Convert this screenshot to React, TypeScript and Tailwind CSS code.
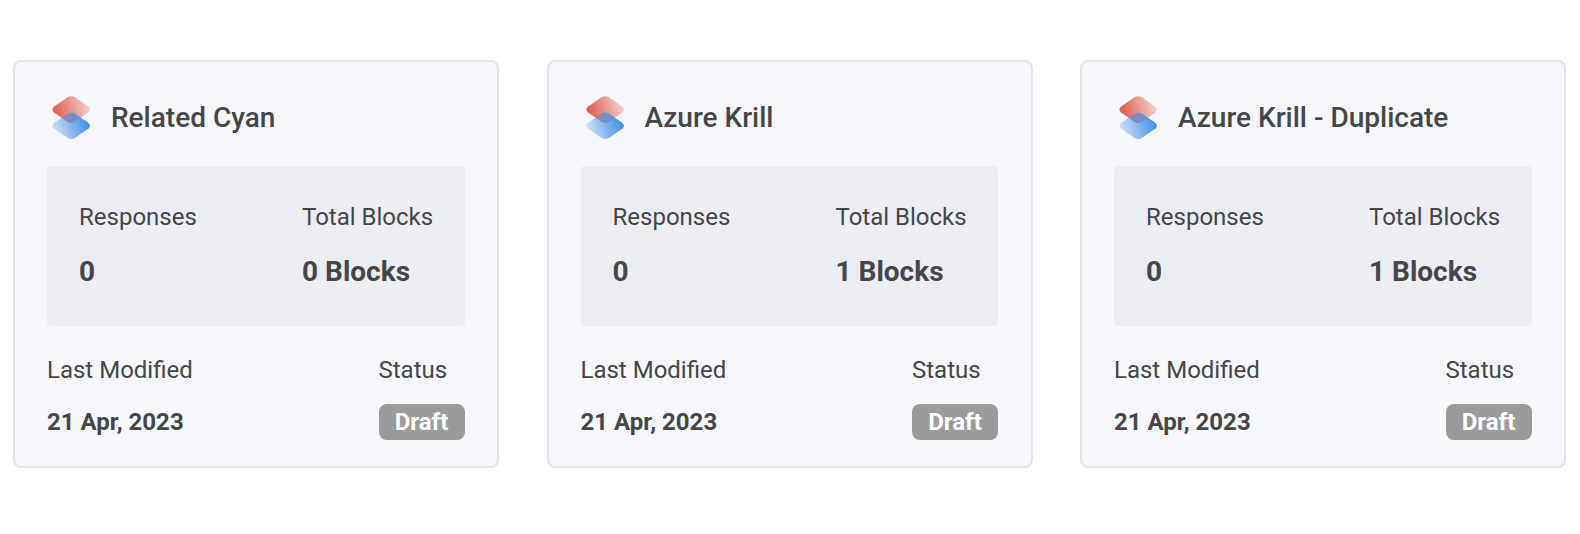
const cards = [
  { id: "a", title: "Related Cyan", blocks: "0 Blocks" },
  { id: "b", title: "Azure Krill", blocks: "1 Blocks" },
  { id: "c", title: "Azure Krill - Duplicate", blocks: "1 Blocks" },
];

function Logo({ id }: { id: string }) {
  const diamond = "M15.200 1.200 Q18.700 -0.600 22.200 1.200 L35.700 10.500 Q38.300 13.200 35.700 15.900 L22.200 25.300 Q18.700 27.100 15.200 25.300 L1.700 15.900 Q-0.900 13.200 1.700 10.500 Z";
  return (
    <svg width="39" height="44" viewBox="0 0 38 43" className="shrink-0">
      <defs>
        <linearGradient id={`${id}r`} x1="0.05" y1="0.55" x2="1" y2="0.4">
          <stop offset="0" stopColor="#e0604f" />
          <stop offset="1" stopColor="#e0604f" stopOpacity="0.25" />
        </linearGradient>
        <linearGradient id={`${id}b`} x1="0.05" y1="0.6" x2="1" y2="0.4">
          <stop offset="0" stopColor="#3f8de6" stopOpacity="0.25" />
          <stop offset="1" stopColor="#3f8de6" />
        </linearGradient>
      </defs>
      <path d={diamond} fill={`url(#${id}r)`} />
      <path d={diamond} fill={`url(#${id}b)`} transform="translate(0 15.800)" />
    </svg>
  );
}

export default function App() {
  return (
    <div className="w-[1580px] h-[534px] bg-white flex gap-[47.5px] pl-[13px] pt-[60px] font-['Roboto',sans-serif] text-[#454648]">
      {cards.map((c) => (
        <div key={c.id} className="w-[486px] h-[408px] bg-[#f5f7fb] border-2 border-[#e1e3e8] rounded-lg pl-[32px] pr-[32.5px] pt-[34px]">
          <div className="flex items-center gap-[20px] pl-[5px] h-[44px]">
            <Logo id={c.id} />
            <div className="text-[28px] font-medium leading-none">{c.title}</div>
          </div>
          <div className="mt-[26px] h-[160px] bg-[#ecedf2] rounded pl-[32px] pt-[37px] flex">
            <div className="w-[223px]">
              <div className="text-[24px] leading-[28px]">Responses</div>
              <div className="text-[28px] font-bold leading-[32px] mt-[25px]">0</div>
            </div>
            <div>
              <div className="text-[24px] leading-[28px]">Total Blocks</div>
              <div className="text-[28px] font-bold leading-[32px] mt-[25px]">{c.blocks}</div>
            </div>
          </div>
          <div className="mt-[28px] flex justify-between">
            <div>
              <div className="text-[24px] leading-[32px]">Last Modified</div>
              <div className="text-[24px] font-bold leading-[32px] mt-[20px]">21 Apr, 2023</div>
            </div>
            <div>
              <div className="text-[24px] leading-[32px]">Status</div>
              <div className="mt-[18px] w-[86px] h-[36px] rounded-lg bg-[#9b9b9b] text-white text-[24px] font-bold flex items-center justify-center">Draft</div>
            </div>
          </div>
        </div>
      ))}
    </div>
  );
}
